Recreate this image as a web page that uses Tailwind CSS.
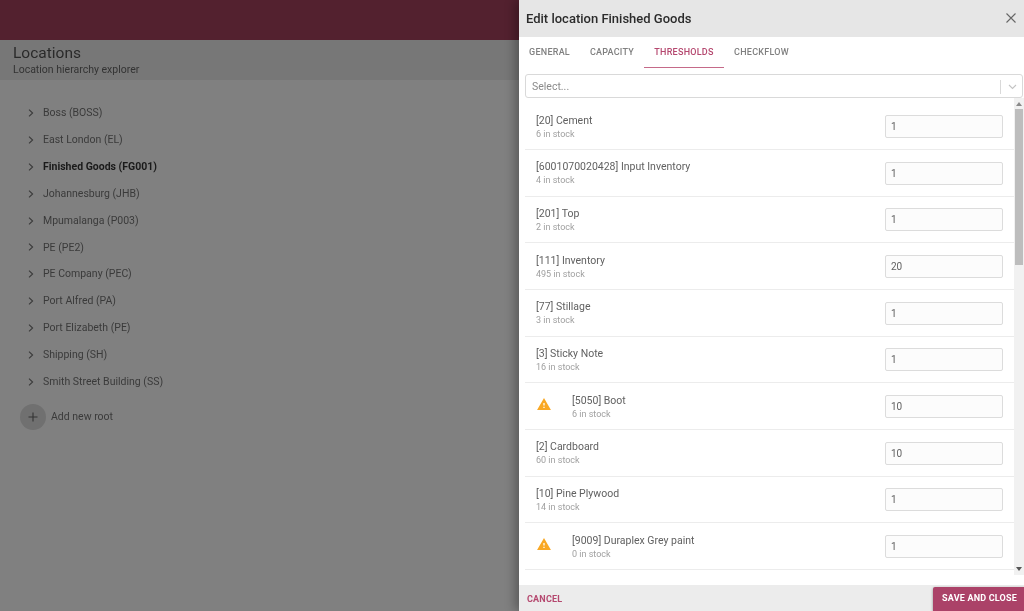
<!DOCTYPE html>
<html><head><meta charset="utf-8"><script src="https://cdn.jsdelivr.net/npm/@tailwindcss/browser@4"></script></head>
<body class="m-0 overflow-hidden">
<div class="relative flex h-[611px] w-[1024px] overflow-hidden bg-[#808080] font-['Roboto',sans-serif] blur-[0.3px]">
  <main class="flex h-full w-[519px] flex-col">
    <header class="h-10 bg-[#53212f] shadow-[0_1px_3px_rgba(0,0,0,0.3)]"></header>
    <section class="flex h-10 flex-col bg-[#777777] pl-[13px] pt-[4px]">
      <h1 class="text-[15.500px] leading-[19px] text-[#2a2a2a]">Locations</h1>
      <p class="text-[10.500px] leading-[14px] text-[#333333]">Location hierarchy explorer</p>
    </section>
    <ul class="flex flex-col pl-[28px] pt-[19.500px] text-[10.500px] text-[#3a3a3a]">
      <li class="flex h-[26.900px] items-center gap-[9px]"><svg width="6" height="8" viewBox="0 0 6 8" fill="none" stroke="#3a3a3a" stroke-width="1.1"><path d="M1 .7 4.6 4 1 7.3"/></svg><span>Boss (BOSS)</span></li>
      <li class="flex h-[26.900px] items-center gap-[9px]"><svg width="6" height="8" viewBox="0 0 6 8" fill="none" stroke="#3a3a3a" stroke-width="1.1"><path d="M1 .7 4.6 4 1 7.3"/></svg><span>East London (EL)</span></li>
      <li class="flex h-[26.900px] items-center gap-[9px]"><svg width="6" height="8" viewBox="0 0 6 8" fill="none" stroke="#3a3a3a" stroke-width="1.1"><path d="M1 .7 4.6 4 1 7.3"/></svg><span class="font-bold text-[#1a1a1a]">Finished Goods (FG001)</span></li>
      <li class="flex h-[26.900px] items-center gap-[9px]"><svg width="6" height="8" viewBox="0 0 6 8" fill="none" stroke="#3a3a3a" stroke-width="1.1"><path d="M1 .7 4.6 4 1 7.3"/></svg><span>Johannesburg (JHB)</span></li>
      <li class="flex h-[26.900px] items-center gap-[9px]"><svg width="6" height="8" viewBox="0 0 6 8" fill="none" stroke="#3a3a3a" stroke-width="1.1"><path d="M1 .7 4.6 4 1 7.3"/></svg><span>Mpumalanga (P003)</span></li>
      <li class="flex h-[26.900px] items-center gap-[9px]"><svg width="6" height="8" viewBox="0 0 6 8" fill="none" stroke="#3a3a3a" stroke-width="1.1"><path d="M1 .7 4.6 4 1 7.3"/></svg><span>PE (PE2)</span></li>
      <li class="flex h-[26.900px] items-center gap-[9px]"><svg width="6" height="8" viewBox="0 0 6 8" fill="none" stroke="#3a3a3a" stroke-width="1.1"><path d="M1 .7 4.6 4 1 7.3"/></svg><span>PE Company (PEC)</span></li>
      <li class="flex h-[26.900px] items-center gap-[9px]"><svg width="6" height="8" viewBox="0 0 6 8" fill="none" stroke="#3a3a3a" stroke-width="1.1"><path d="M1 .7 4.6 4 1 7.3"/></svg><span>Port Alfred (PA)</span></li>
      <li class="flex h-[26.900px] items-center gap-[9px]"><svg width="6" height="8" viewBox="0 0 6 8" fill="none" stroke="#3a3a3a" stroke-width="1.1"><path d="M1 .7 4.6 4 1 7.3"/></svg><span>Port Elizabeth (PE)</span></li>
      <li class="flex h-[26.900px] items-center gap-[9px]"><svg width="6" height="8" viewBox="0 0 6 8" fill="none" stroke="#3a3a3a" stroke-width="1.1"><path d="M1 .7 4.6 4 1 7.3"/></svg><span>Shipping (SH)</span></li>
      <li class="flex h-[26.900px] items-center gap-[9px]"><svg width="6" height="8" viewBox="0 0 6 8" fill="none" stroke="#3a3a3a" stroke-width="1.1"><path d="M1 .7 4.6 4 1 7.3"/></svg><span>Smith Street Building (SS)</span></li>
    </ul>
    <div class="ml-[20px] mt-[8.500px] flex items-center gap-[5px] text-[10.500px] text-[#3a3a3a]">
      <span class="flex h-[26px] w-[26px] items-center justify-center rounded-full bg-[#707070]"><svg width="10" height="10" viewBox="0 0 10 10" stroke="#333" stroke-width="1.1"><path d="M5 .5v9M.5 5h9"/></svg></span>
      <span>Add new root</span>
    </div>
  </main>
  <aside class="flex h-full w-[505px] flex-col bg-white shadow-[-4px_0_10px_rgba(0,0,0,0.3)]">
    <div class="flex h-[37px] items-center justify-between bg-[#e6e6e6] pl-[7px] pr-[8px]">
      <h2 class="text-[13px] font-medium text-[#2b2b2b]">Edit location Finished Goods</h2>
      <svg class="mb-[1px]" width="10" height="10" viewBox="0 0 10 10" stroke="#666" stroke-width="1.1"><path d="M.5.5l9 9M9.500.5l-9 9"/></svg>
    </div>
    <nav class="flex h-[31px] text-[9px] font-medium tracking-[0.25px] text-[#808080]">
      <span class="flex w-[61px] items-center justify-center">GENERAL</span>
      <span class="flex w-[64px] items-center justify-center">CAPACITY</span>
      <span class="flex w-[80px] items-center justify-center border-b-[1.5px] border-[#c56a89] pt-[1px] text-[#b5486f]">THRESHOLDS</span>
      <span class="flex w-[75px] items-center justify-center">CHECKFLOW</span>
    </nav>
    <div class="ml-[6px] mr-[1px] mt-[6px] flex h-[24px] items-center justify-between rounded-[3px] border border-[#d9d9d9] pl-[6px] pt-[1px] text-[10.500px] text-[#8a8a8a]">
      <span>Select...</span>
      <span class="flex h-[14px] items-center border-l border-[#d9d9d9] pl-[7px] pr-[5px]"><svg width="9" height="6" viewBox="0 0 9 6" fill="none" stroke="#c4c4c4" stroke-width="1.1"><path d="M1 1l3.500 3.500L8 1"/></svg></span>
    </div>
    <div class="relative flex min-h-0 flex-1 overflow-hidden">
      <ul class="ml-[6px] w-[489px] pt-[5.500px] text-[#616161]">
        <li class="flex h-[46.670px] items-center justify-between border-b border-[#ececec] pl-[11px] pr-[11px]"><div class="mt-[2px]"><div class="text-[10.500px] leading-[14px]">[20] Cement</div><div class="text-[9px] leading-[13px] text-[#a0a0a0]">6 in stock</div></div><input value="1" class="mt-[0.500px] h-[23px] w-[118px] rounded-[2px] border border-[#dcdcdc] bg-[#fcfcfc] pl-[5px] text-[10px] text-[#616161]"></li>
        <li class="flex h-[46.670px] items-center justify-between border-b border-[#ececec] pl-[11px] pr-[11px]"><div class="mt-[2px]"><div class="text-[10.500px] leading-[14px]">[6001070020428] Input Inventory</div><div class="text-[9px] leading-[13px] text-[#a0a0a0]">4 in stock</div></div><input value="1" class="mt-[0.500px] h-[23px] w-[118px] rounded-[2px] border border-[#dcdcdc] bg-[#fcfcfc] pl-[5px] text-[10px] text-[#616161]"></li>
        <li class="flex h-[46.670px] items-center justify-between border-b border-[#ececec] pl-[11px] pr-[11px]"><div class="mt-[2px]"><div class="text-[10.500px] leading-[14px]">[201] Top</div><div class="text-[9px] leading-[13px] text-[#a0a0a0]">2 in stock</div></div><input value="1" class="mt-[0.500px] h-[23px] w-[118px] rounded-[2px] border border-[#dcdcdc] bg-[#fcfcfc] pl-[5px] text-[10px] text-[#616161]"></li>
        <li class="flex h-[46.670px] items-center justify-between border-b border-[#ececec] pl-[11px] pr-[11px]"><div class="mt-[2px]"><div class="text-[10.500px] leading-[14px]">[111] Inventory</div><div class="text-[9px] leading-[13px] text-[#a0a0a0]">495 in stock</div></div><input value="20" class="mt-[0.500px] h-[23px] w-[118px] rounded-[2px] border border-[#dcdcdc] bg-[#fcfcfc] pl-[5px] text-[10px] text-[#616161]"></li>
        <li class="flex h-[46.670px] items-center justify-between border-b border-[#ececec] pl-[11px] pr-[11px]"><div class="mt-[2px]"><div class="text-[10.500px] leading-[14px]">[77] Stillage</div><div class="text-[9px] leading-[13px] text-[#a0a0a0]">3 in stock</div></div><input value="1" class="mt-[0.500px] h-[23px] w-[118px] rounded-[2px] border border-[#dcdcdc] bg-[#fcfcfc] pl-[5px] text-[10px] text-[#616161]"></li>
        <li class="flex h-[46.670px] items-center justify-between border-b border-[#ececec] pl-[11px] pr-[11px]"><div class="mt-[2px]"><div class="text-[10.500px] leading-[14px]">[3] Sticky Note</div><div class="text-[9px] leading-[13px] text-[#a0a0a0]">16 in stock</div></div><input value="1" class="mt-[0.500px] h-[23px] w-[118px] rounded-[2px] border border-[#dcdcdc] bg-[#fcfcfc] pl-[5px] text-[10px] text-[#616161]"></li>
        <li class="flex h-[46.670px] items-center border-b border-[#ececec] pl-[12px] pr-[11px]"><svg class="mb-[4px] mr-[21px]" width="14" height="12" viewBox="1 2 22 19"><path d="M1 21h22L12 2 1 21zm12-3h-2v-2h2v2zm0-4h-2v-4h2v4z" fill="#f9a825"/></svg><div class="mt-[2px] flex-1"><div class="text-[10.500px] leading-[14px]">[5050] Boot</div><div class="text-[9px] leading-[13px] text-[#a0a0a0]">6 in stock</div></div><input value="10" class="mt-[0.500px] h-[23px] w-[118px] rounded-[2px] border border-[#dcdcdc] bg-[#fcfcfc] pl-[5px] text-[10px] text-[#616161]"></li>
        <li class="flex h-[46.670px] items-center justify-between border-b border-[#ececec] pl-[11px] pr-[11px]"><div class="mt-[2px]"><div class="text-[10.500px] leading-[14px]">[2] Cardboard</div><div class="text-[9px] leading-[13px] text-[#a0a0a0]">60 in stock</div></div><input value="10" class="mt-[0.500px] h-[23px] w-[118px] rounded-[2px] border border-[#dcdcdc] bg-[#fcfcfc] pl-[5px] text-[10px] text-[#616161]"></li>
        <li class="flex h-[46.670px] items-center justify-between border-b border-[#ececec] pl-[11px] pr-[11px]"><div class="mt-[2px]"><div class="text-[10.500px] leading-[14px]">[10] Pine Plywood</div><div class="text-[9px] leading-[13px] text-[#a0a0a0]">14 in stock</div></div><input value="1" class="mt-[0.500px] h-[23px] w-[118px] rounded-[2px] border border-[#dcdcdc] bg-[#fcfcfc] pl-[5px] text-[10px] text-[#616161]"></li>
        <li class="flex h-[46.670px] items-center border-b border-[#ececec] pl-[12px] pr-[11px]"><svg class="mb-[4px] mr-[21px]" width="14" height="12" viewBox="1 2 22 19"><path d="M1 21h22L12 2 1 21zm12-3h-2v-2h2v2zm0-4h-2v-4h2v4z" fill="#f9a825"/></svg><div class="mt-[2px] flex-1"><div class="text-[10.500px] leading-[14px]">[9009] Duraplex Grey paint</div><div class="text-[9px] leading-[13px] text-[#a0a0a0]">0 in stock</div></div><input value="1" class="mt-[0.500px] h-[23px] w-[118px] rounded-[2px] border border-[#dcdcdc] bg-[#fcfcfc] pl-[5px] text-[10px] text-[#616161]"></li>
      </ul>
      <div class="ml-auto flex h-[477px] w-[10px] flex-col items-center bg-[#f1f1f1]">
        <svg class="mt-[4px]" width="6" height="4" viewBox="0 0 6 4"><path d="M3 0 6 4H0z" fill="#8a8a8a"/></svg>
        <div class="mt-[3px] h-[156px] w-[8px] bg-[#bdbdbd]"></div>
        <svg class="mb-[4px] mt-auto" width="6" height="4" viewBox="0 0 6 4"><path d="M0 0h6L3 4z" fill="#555"/></svg>
      </div>
    </div>
    <footer class="flex h-[26px] justify-between bg-[#ececec] pl-[8px] text-[9px] font-bold tracking-[0.2px]">
      <span class="pt-[8px] text-[#b5486f]">CANCEL</span>
      <span class="mt-[2px] flex h-[24px] w-[91px] items-center justify-center rounded-tl-[2px] bg-[#ab4268] pl-[2px] text-white shadow-[0_1px_3px_rgba(0,0,0,0.4)]">SAVE AND CLOSE</span>
    </footer>
  </aside>
</div>
</body></html>
